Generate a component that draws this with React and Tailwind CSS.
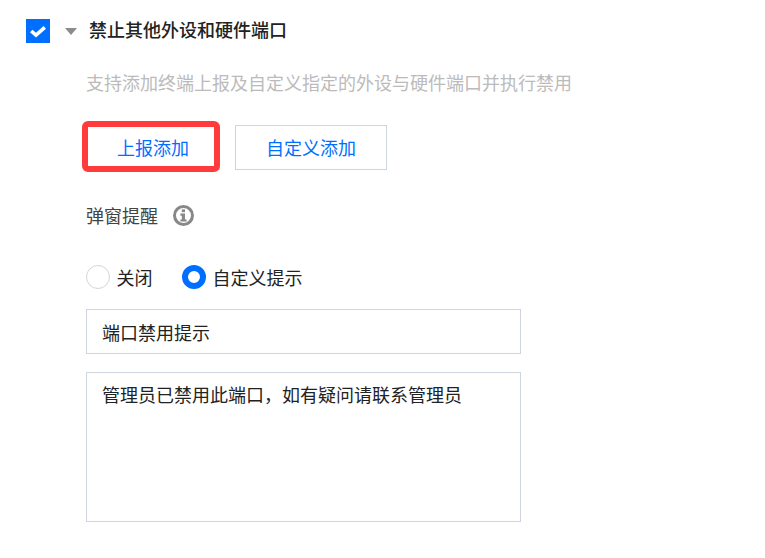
export default function App() {
  return (
    <div className="w-[765px] h-[558px] overflow-hidden bg-white pt-[19px] pl-[26px] text-[18px] text-[#222] font-['Noto_Sans_CJK_SC','Liberation_Sans',sans-serif]">
      <div className="flex items-center h-[24px]">
        <span className="flex items-center justify-center w-[24px] h-[24px] bg-[#006eff]">
          <svg width="24" height="24" viewBox="0 0 24 24">
            <path d="M5.2 12l4.8 4.2L18.8 8.4" fill="none" stroke="#fff" strokeWidth="3.6" />
          </svg>
        </span>
        <svg className="ml-[15px]" width="12" height="8" viewBox="0 0 12 8">
          <path d="M0 1h12L6 8z" fill="#8c8c8c" />
        </svg>
        <span className="ml-[12px] pb-[4px] font-medium leading-[24px]">禁止其他外设和硬件端口</span>
      </div>

      <div className="pl-[60px]">
        <p className="mt-[27px] leading-[24px] text-[#bbbbbb]">
          支持添加终端上报及自定义指定的外设与硬件端口并执行禁用
        </p>

        <div className="mt-[31px] flex gap-[15px]">
          <div className="relative">
            <button className="h-[45px] w-[134px] border border-[#cfd5de] text-[#006eff]">上报添加</button>
            <div className="absolute -left-[4px] -top-[4px] w-[138px] h-[51px] border-[6px] border-[#ff3b3b] rounded-[6px]" />
          </div>
          <button className="h-[45px] w-[152px] border border-[#cfd5de] text-[#006eff]">自定义添加</button>
        </div>

        <div className="mt-[33px] flex items-center h-[24px]">
          <span className="text-[#444]">弹窗提醒</span>
          <svg className="ml-[15px]" width="21" height="21" viewBox="0 0 21 21">
            <circle cx="10.5" cy="10.5" r="9" fill="none" stroke="#888" strokeWidth="3" />
            <rect x="8.8" y="4.4" width="3.2" height="2.8" fill="#888" />
            <path d="M7.4 8.6h4.6v5.8h1.6v2.2H7.4v-2.2h1.4v-3.6H7.4z" fill="#888" />
          </svg>
        </div>

        <div className="mt-[38px] flex items-center h-[24px]">
          <span className="w-[24px] h-[24px] rounded-full border border-[#cfd5de] bg-white" />
          <span className="ml-[6.5px] leading-[24px]">关闭</span>
          <span className="ml-[29.5px] w-[24px] h-[24px] rounded-full border-[6px] border-[#006eff] bg-white" />
          <span className="ml-[6.5px] leading-[24px]">自定义提示</span>
        </div>

        <input
          readOnly
          value="端口禁用提示"
          className="mt-[20px] block w-[435px] h-[45px] px-[15px] border border-[#cfd5de] text-[#222] outline-none"
        />
        <textarea
          readOnly
          value="管理员已禁用此端口，如有疑问请联系管理员"
          className="mt-[18px] block w-[435px] h-[150px] px-[15px] py-[8px] leading-[27px] border border-[#cfd5de] text-[#222] outline-none resize-none"
        />
      </div>
    </div>
  );
}
